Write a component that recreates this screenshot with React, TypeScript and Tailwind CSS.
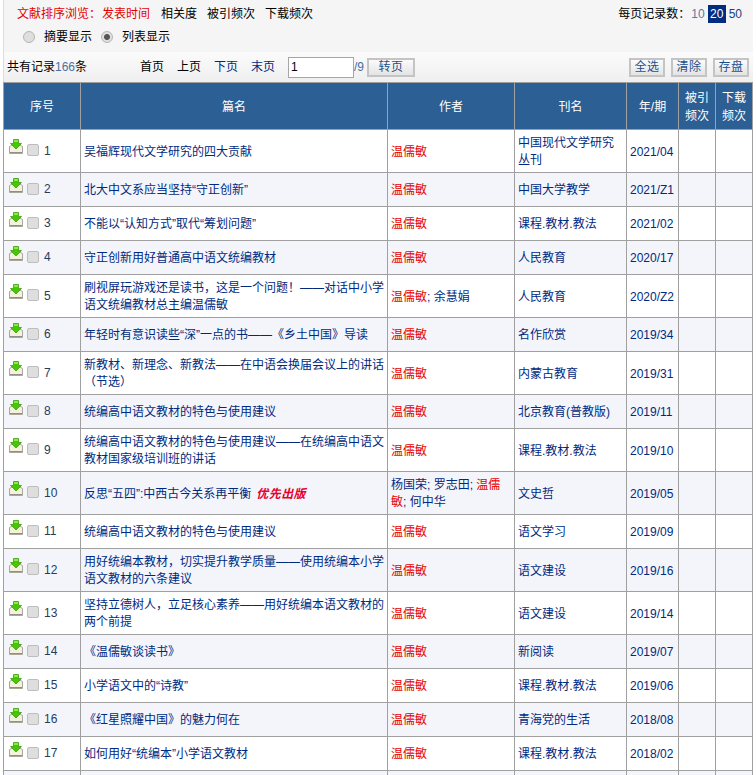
import React from "react";

type Row = { t: React.ReactNode; a?: React.ReactNode; j: string; y: string; h: number };

const M = "温儒敏";
const rows: Row[] = [
  { t: "吴福辉现代文学研究的四大贡献", j: "中国现代文学研究丛刊", y: "2021/04", h: 43 },
  { t: "北大中文系应当坚持“守正创新”", j: "中国大学教学", y: "2021/Z1", h: 34 },
  { t: "不能以“认知方式”取代“筹划问题”", j: "课程.教材.教法", y: "2021/02", h: 34 },
  { t: "守正创新用好普通高中语文统编教材", j: "人民教育", y: "2020/17", h: 34 },
  {
    t: "刷视屏玩游戏还是读书\uFF0C这是一个问题\uFF01——对话中小学语文统编教材总主编温儒敏",
    a: (
      <>
        <span className="text-[#e60000]">{M}</span>; 余慧娟
      </>
    ),
    j: "人民教育",
    y: "2020/Z2",
    h: 43,
  },
  { t: "年轻时有意识读些“深”一点的书——《乡土中国》导读", j: "名作欣赏", y: "2019/34", h: 34 },
  { t: "新教材、新理念、新教法——在中语会换届会议上的讲话\uFF08节选\uFF09", j: "内蒙古教育", y: "2019/31", h: 43 },
  { t: "统编高中语文教材的特色与使用建议", j: "北京教育(普教版)", y: "2019/11", h: 34 },
  { t: "统编高中语文教材的特色与使用建议——在统编高中语文教材国家级培训班的讲话", j: "课程.教材.教法", y: "2019/10", h: 43 },
  {
    t: (
      <>
        反思“五四”:中西古今关系再平衡
        <span className="ml-[5px] font-bold italic tracking-[0.4px] text-[#e6002e]">优先出版</span>
      </>
    ),
    a: (
      <>
        杨国荣; 罗志田; <span className="text-[#e60000]">{M}</span>; 何中华
      </>
    ),
    j: "文史哲",
    y: "2019/05",
    h: 43,
  },
  { t: "统编高中语文教材的特色与使用建议", j: "语文学习", y: "2019/09", h: 34 },
  { t: "用好统编本教材\uFF0C切实提升教学质量——使用统编本小学语文教材的六条建议", j: "语文建设", y: "2019/16", h: 43 },
  { t: "坚持立德树人\uFF0C立足核心素养——用好统编本语文教材的两个前提", j: "语文建设", y: "2019/14", h: 43 },
  { t: "《温儒敏谈读书》", j: "新阅读", y: "2019/07", h: 34 },
  { t: "小学语文中的“诗教”", j: "课程.教材.教法", y: "2019/06", h: 34 },
  { t: "《红星照耀中国》的魅力何在", j: "青海党的生活", y: "2018/08", h: 34 },
  { t: "如何用好“统编本”小学语文教材", j: "课程.教材.教法", y: "2018/02", h: 34 },
];

function DownloadIcon() {
  return (
    <svg width="14" height="15" viewBox="0 0 14 15" className="mb-[9px] shrink-0">
      <path d="M0.5 7.5 L7 4 L13.5 7.5 V14.5 H0.5 Z" fill="#f4f1df" stroke="#a8a89a" />
      <path d="M1 13.5 H13" stroke="#8f8f85" strokeWidth="1" />
      <path d="M4.5 0.5 H9.5 V4.5 H12.5 L7 10 L1.5 4.5 H4.5 Z" fill="#44c800" stroke="#2f9a00" strokeWidth="0.7" />
      <path d="M5 1 H9 V3 H5 Z" fill="#8fe84a" />
    </svg>
  );
}

function ToolBtn({ label, w }: { label: string; w: string }) {
  return (
    <button
      className={`${w} h-[19px] border-2 border-[#c4c4c4] bg-gradient-to-b from-[#fbfbfb] to-[#e4e4e4] text-[12px] leading-[15px] tracking-[0.5px] text-[#1f4f8a]`}
    >
      {label}
    </button>
  );
}

export default function App() {
  const font = { fontFamily: '"Liberation Sans", "Noto Sans CJK SC", sans-serif' };
  const td = "border border-[#a0a0a0] px-[3px] py-0 text-left align-middle";
  const tx = "border border-[#a0a0a0] px-[3px] pb-0 pt-[2px] text-left align-middle text-[#002a80]";
  const th = "border border-[#a0a0a0] px-[2px] pb-0 pt-[2px] text-center align-middle font-normal leading-[18px]";
  return (
    <div style={font} className="h-[775px] w-[756px] overflow-hidden bg-white text-[12px] leading-[17px] text-black">
      <div className="ml-[3px] w-[750px] border-l border-[#dddddd]">
        <div className="flex h-[52px] justify-between bg-[#f5f5f5]">
          <div className="pl-[13px] pt-[5px]">
            <div className="flex h-[18px] items-center">
              <span className="w-[85px] text-[#e60000]">{"文献排序浏览\uFF1A"}</span>
              <span className="w-[59px] text-[#e60000]">发表时间</span>
              <span className="w-[46px]">相关度</span>
              <span className="w-[58px]">被引频次</span>
              <span>下载频次</span>
            </div>
            <div className="mt-[5px] flex h-[18px] items-center pl-[6px]">
              <span className="h-[12px] w-[12px] rounded-full border border-[#b5b5b5] bg-[#dedede]" />
              <span className="ml-[9px]">摘要显示</span>
              <span className="ml-[9px] h-[12px] w-[12px] rounded-full border border-[#b5b5b5] bg-[radial-gradient(circle,#555555_2.5px,#dedede_3.5px)]" />
              <span className="ml-[9px]">列表显示</span>
            </div>
          </div>
          <div className="flex items-start pr-[11px] pt-[5px]">
            <span className="flex h-[18px] items-center">{"每页记录数\uFF1A"}</span>
            <span className="ml-[1px] flex h-[18px] items-center text-[#5a78a8]">10</span>
            <span className="ml-[3px] flex h-[18px] w-[18px] items-center justify-center bg-[#002d80] text-white">20</span>
            <span className="ml-[3px] flex h-[18px] items-center text-[#16437e]">50</span>
          </div>
        </div>

        <div className="flex h-[30px] items-center bg-gradient-to-b from-[#fbfbfb] to-[#efefef] pl-[3px]">
          <span className="w-[133px]">
            共有记录<span className="text-[#4a6fa5]">166</span>条
          </span>
          <span className="w-[37px]">首页</span>
          <span className="w-[37px]">上页</span>
          <span className="w-[37px] text-[#002a80]">下页</span>
          <span className="w-[37px] text-[#002a80]">末页</span>
          <span className="flex h-[21px] w-[66px] items-center border border-[#a6a6a6] bg-white pl-[2px]">1</span>
          <span className="w-[13px] text-[#4a6fa5]">/9</span>
          <button className="h-[19px] w-[48px] border-2 border-[#c4c4c4] bg-gradient-to-b from-[#fbfbfb] to-[#e4e4e4] text-[12px] leading-[15px] tracking-[0.5px] text-[#1f4f8a]">
            转页
          </button>
          <div className="ml-[214px] flex gap-[6px]">
            <ToolBtn label="全选" w="w-[36px]" />
            <ToolBtn label="清除" w="w-[36px]" />
            <ToolBtn label="存盘" w="w-[36px]" />
          </div>
        </div>

        <table className="w-[750px] -ml-px table-fixed border-collapse">
          <colgroup>
            <col className="w-[77px]" />
            <col className="w-[307px]" />
            <col className="w-[127px]" />
            <col className="w-[112px]" />
            <col className="w-[52px]" />
            <col className="w-[37px]" />
            <col className="w-[37px]" />
          </colgroup>
          <thead>
            <tr className="h-[47px] bg-[#2c5f94] text-white">
              <th className={th}>序号</th>
              <th className={th}>篇名</th>
              <th className={th}>作者</th>
              <th className={th}>刊名</th>
              <th className={th}>年/期</th>
              <th className={th}>被引频次</th>
              <th className={th}>下载频次</th>
            </tr>
          </thead>
          <tbody>
            {rows.map((r, i) => (
              <tr key={i} style={{ height: r.h }} className={i % 2 ? "bg-[#f3f5fb]" : "bg-white"}>
                <td className={`${td} pl-[5px]`}>
                  <div className="flex items-center">
                    <DownloadIcon />
                    <span className="mb-[2px] ml-[4px] h-[12px] w-[12px] shrink-0 rounded-[2px] border border-[#bdbdbd] bg-[#dedede]" />
                    <span className="ml-[5px] text-[#2a3a5a]">{i + 1}</span>
                  </div>
                </td>
                <td className={tx}>{r.t}</td>
                <td className={`${tx} break-all`}>{r.a ?? <span className="text-[#e60000]">{M}</span>}</td>
                <td className={tx}>{r.j}</td>
                <td className={tx}>{r.y}</td>
                <td className={td} />
                <td className={td} />
              </tr>
            ))}
            <tr className="h-[34px] bg-[#f3f5fb]">
              <td className={td} />
              <td className={td} />
              <td className={td} />
              <td className={td} />
              <td className={td} />
              <td className={td} />
              <td className={td} />
            </tr>
          </tbody>
        </table>
      </div>
    </div>
  );
}
